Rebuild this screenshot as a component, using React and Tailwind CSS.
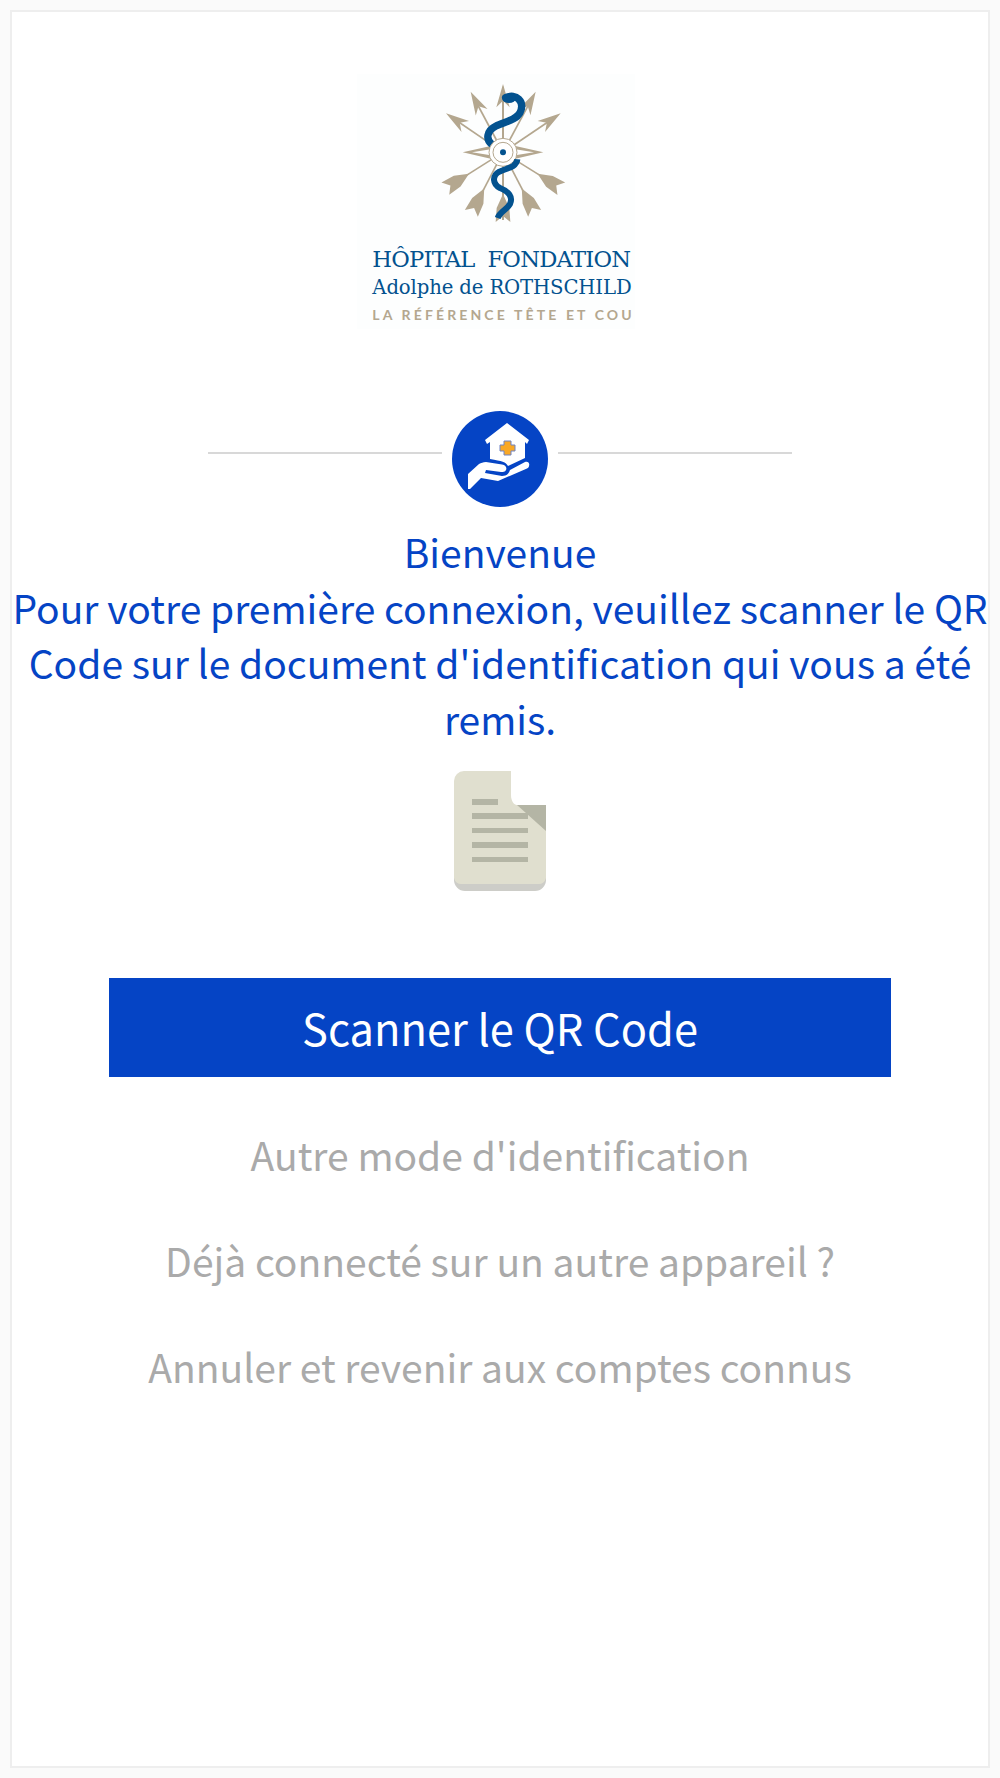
const ARROWS = [
  { x: 392, y: 95, kind: 'tip' },
  { x: 587, y: 95, kind: 'tip' },
  { x: 318, y: 160, kind: 'tip' },
  { x: 662, y: 160, kind: 'tip' },
  { x: 489, y: 72, kind: 'tip' },
  { x: 316, y: 386, kind: 'tail' },
  { x: 664, y: 386, kind: 'tail' },
  { x: 394, y: 460, kind: 'tail' },
  { x: 584, y: 460, kind: 'tail' },
  { x: 489, y: 486, kind: 'tail' },
]

function Logo() {
  const cx = 489
  const cy = 277
  return (
    <svg width="320" height="280" viewBox="0 0 960 840" className="block shrink-0">
      <rect x="51" y="42" width="834" height="765" fill="#fdfefe" />
      <line x1={cx} y1="80" x2={cx} y2="480" stroke="#b4a78f" strokeWidth="6" />
      {ARROWS.map((a) => {
        const dx = a.x - cx
        const dy = a.y - cy
        const len = Math.hypot(dx, dy)
        const angle = (Math.atan2(dx, -dy) * 180) / Math.PI
        return (
          <g key={a.x + '-' + a.y} transform={`translate(${a.x} ${a.y}) rotate(${angle})`}>
            <line x1="0" y1="30" x2="0" y2={len - 30} stroke="#b4a78f" strokeWidth="5" />
            {a.kind === 'tip' ? (
              <path d="M0 0 L20 70 L0 50 L-20 70 Z" fill="#b4a78f" />
            ) : (
              <path d="M0 18 L22 0 L19 42 L0 84 L-19 42 L-22 0 Z" fill="#b4a78f" />
            )}
          </g>
        )
      })}
      <path d="M368 277 L452 258 L452 296 Z" fill="#b4a78f" />
      <path d="M610 277 L526 258 L526 296 Z" fill="#b4a78f" />
      <path d="M396 277 L452 268 L452 286 Z" fill="#ffffff" />
      <path d="M582 277 L526 268 L526 286 Z" fill="#ffffff" />
      <path
        d="M497 113 C528 98 556 125 540 158 C528 182 490 186 468 198 C440 212 436 238 456 254"
        fill="none"
        stroke="#03528f"
        strokeWidth="22"
        strokeLinecap="round"
      />
      <ellipse cx="507" cy="116" rx="20" ry="13" fill="#03528f" />
      <circle cx="489" cy="277" r="42" fill="#ffffff" stroke="#b4a78f" strokeWidth="3" />
      <circle cx="489" cy="277" r="30" fill="#ffffff" stroke="#b4a78f" strokeWidth="3" />
      <circle cx="489" cy="277" r="9" fill="#03528f" />
      <path
        d="M532 298 C530 322 500 325 478 335 C455 348 458 372 480 384 C505 394 520 410 510 432 C500 450 480 455 473 474"
        fill="none"
        stroke="#03528f"
        strokeWidth="18"
      />
      <text x="97" y="620" fontFamily="'DejaVu Serif', serif" fontSize="68" fill="#03528f" textLength="776">
        HÔPITAL{'\u00A0\u00A0'}FONDATION
      </text>
      <text x="97" y="702" fontFamily="'DejaVu Serif', serif" fontSize="59" fill="#03528f" textLength="778">
        Adolphe de ROTHSCHILD
      </text>
      <text x="97" y="780" fontFamily="'Lato', sans-serif" fontSize="42" fontWeight="700" fill="#b4a78f" textLength="778">
        LA RÉFÉRENCE TÊTE ET COU
      </text>
    </svg>
  )
}

function CareIcon() {
  return (
    <div className="w-[96px] h-[96px] rounded-full bg-[#0544c5] shrink-0">
      <svg width="96" height="96" viewBox="0 0 96 96" className="block">
        <path d="M55 12 L77 29 L75 33 L73 31 L73 47 L56 55 C54 51 50 50 38 48 L38 31 L35 33 L33 29 Z" fill="#ffffff" />
        <path
          d="M52 30 H59 V34 H63 V40 H59 V44 H52 V40 H48 V34 H52 Z"
          fill="#f9a825"
          stroke="#6f83c4"
          strokeWidth="1"
        />
        <path
          d="M16 78 L16 63 L27 53 C29 52 31 51 34 51 L50 53.5 C54 54 55 57 54 59 C53 61 51 61 49 61 L34 59 L33 62 L50 65 C55 65 57 62 58 59 L73 51 C76 50 78 52 77 55 C77 56 76 57 75 57.5 L46 70 L29 67 L18 78 Z"
          fill="#ffffff"
        />
      </svg>
    </div>
  )
}

function DocumentIcon() {
  return (
    <svg width="92" height="120" viewBox="0 0 92 120" className="block shrink-0">
      <path d="M0 100 V109 A11 11 0 0 0 11 120 H81 A11 11 0 0 0 92 109 V100 Z" fill="#cdcdc8" />
      <path
        d="M10 0 H57 V24 C57 30 60 34 63 34 H92 V107 A8 8 0 0 1 84 113 H8 A8 8 0 0 1 0 107 V10 A10 10 0 0 1 10 0 Z"
        fill="#e0dfcf"
      />
      <path d="M63 34 H92 V60 Z" fill="#b4b5a5" />
      <rect x="18" y="28" width="26" height="6" fill="#b4b5a5" />
      <rect x="18" y="42" width="56" height="6" fill="#b4b5a5" />
      <rect x="18" y="57" width="56" height="5" fill="#b4b5a5" />
      <rect x="18" y="71" width="56" height="6" fill="#b4b5a5" />
      <rect x="18" y="86" width="56" height="5" fill="#b4b5a5" />
    </svg>
  )
}

export default function App() {
  return (
    <div className="h-[1778px] bg-[#fafafa] p-[10px] font-['Noto_Sans_CJK_SC',sans-serif]">
      <div className="h-full border-2 border-[#eeeeee] bg-white flex flex-col items-center">
        <div className="mt-[48px]">
          <Logo />
        </div>

        {/* Divider with round icon */}
        <div className="mt-[71px] flex items-start gap-[10px]">
          <div className="mt-[41px] w-[234px] h-[2px] bg-[#d8d8d8]"></div>
          <CareIcon />
          <div className="mt-[41px] w-[234px] h-[2px] bg-[#d8d8d8]"></div>
        </div>

        <p className="mt-[17px] w-full text-center text-[39px] leading-[55.5px] text-[#0544c5]">
          Bienvenue
          <br />
          Pour votre première connexion, veuillez scanner le QR Code sur le document d'identification qui vous a été
          remis.
        </p>

        <div className="mt-[25px]">
          <DocumentIcon />
        </div>

        <button className="mt-[87px] w-[782px] h-[99px] bg-[#0544c5] text-white text-[43.4px]">
          Scanner le QR Code
        </button>

        <div className="mt-[50px] flex flex-col items-center gap-[50.5px] text-[39px] leading-[55.5px] text-[#aaaaaa]">
          <span>Autre mode d'identification</span>
          <span>Déjà connecté sur un autre appareil ?</span>
          <span>Annuler et revenir aux comptes connus</span>
        </div>
      </div>
    </div>
  )
}
